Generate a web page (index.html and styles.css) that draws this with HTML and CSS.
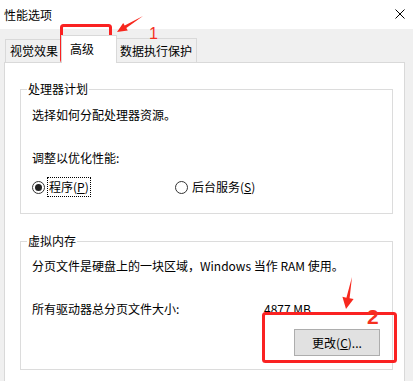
FILE: index.html
```html
<!DOCTYPE html>
<html lang="zh-CN">
<head>
  <meta charset="UTF-8">
  <meta name="viewport" content="width=device-width, initial-scale=1.0">
  <title>性能选项</title>
  <link rel="stylesheet" href="styles.css">
</head>
<body>
  <div class="window">
    <div class="titlebar">
      <span class="title">性能选项</span>
      <svg class="close" width="10" height="10" viewBox="0 0 10 10">
        <path d="M0.5 0.5 L9.5 9.5 M9.5 0.5 L0.5 9.5" stroke="#000" stroke-width="1" fill="none"/>
      </svg>
    </div>

    <div class="dialog">
      <div class="tabs">
        <div class="tab">视觉效果</div>
        <div class="tab active">高级</div>
        <div class="tab">数据执行保护</div>
      </div>

      <div class="panel">
        <fieldset class="group cpu">
          <legend>处理器计划</legend>
          <p class="line first">选择如何分配处理器资源。</p>
          <p class="line next">调整以优化性能:</p>
          <div class="radios">
            <label class="option wide"><span class="radio checked"></span><span class="focus">程序(<u>P</u>)</span></label>
            <label class="option"><span class="radio"></span><span class="text">后台服务(<u>S</u>)</span></label>
          </div>
        </fieldset>

        <fieldset class="group vm">
          <legend>虚拟内存</legend>
          <p class="line first">分页文件是硬盘上的一块区域，Windows 当作 RAM 使用。</p>
          <div class="line next size-row">
            <span>所有驱动器总分页文件大小:</span>
            <span>4877 MB</span>
          </div>
          <div class="actions">
            <button type="button" class="btn">更改(<u>C</u>)...</button>
          </div>
        </fieldset>
      </div>
    </div>

    <!-- red annotations drawn over the screenshot -->
    <svg class="marks" width="413" height="381" viewBox="0 0 413 381">
      <rect x="61.5" y="25.5" width="49" height="36" rx="2" fill="none" stroke="#fa2222" stroke-width="3"/>
      <polygon points="143,16 126.3,28.1 127.8,30.6 117,32 123.2,23 124.7,25.5" fill="#f7281e"/>
      <rect x="263.5" y="313.5" width="132" height="48" rx="2" fill="none" stroke="#fa2222" stroke-width="3"/>
      <polygon points="352,277 349.6,298.3 353.6,299 346,309 342.4,296.8 346.4,297.7" fill="#f7281e"/>
    </svg>
    <span class="num one">1</span>
    <span class="num two">2</span>
  </div>
</body>
</html>
```

FILE: styles.css
```css
body {
  margin: 0;
  font-family: "Noto Sans CJK SC", "Noto Sans", sans-serif;
  font-size: 12px;
  color: #000;
  background-color: #f0f0f0;
  overflow: hidden;
}

.window {
  position: relative;
  width: 413px;
  height: 381px;
  overflow: hidden;
}

.titlebar {
  height: 29px;
  background-color: #fff;
  display: flex;
  align-items: center;
  justify-content: space-between;
  padding: 0 8px 0 4px;
  box-sizing: border-box;
}

.title {
  line-height: 16px;
}

.close {
  display: block;
  margin-top: -1px;
}

.dialog {
  padding: 0 8px 0 4px;
}

.tabs {
  height: 33px;
  display: flex;
  align-items: flex-end;
  padding-left: 1px;
}

.tab {
  height: 22px;
  line-height: 22px;
  padding: 0 4px;
  border: 1px solid #d9d9d9;
  border-bottom: none;
  background-color: #f0f0f0;
  white-space: nowrap;
}

.tab.active {
  position: relative;
  z-index: 1;
  height: 27px;
  line-height: 25px;
  margin: 0 -2px -1px;
  padding: 0 22px 0 8px;
  background-color: #fff;
}

.tab:last-child {
  height: 23px;
  line-height: 23px;
}

.panel {
  height: 330px;
  background-color: #fff;
  border: 1px solid #d9d9d9;
  overflow: hidden;
}

.group {
  margin: 18px 11px 0 15px;
  padding: 0 12px 16px 11px;
  border: 1px solid #dcdcdc;
  min-width: 0;
}

.group.vm {
  margin-top: 19px;
  padding-bottom: 13px;
}

legend {
  padding: 0 1px;
  margin-left: -5px;
  line-height: 16px;
}

.line {
  margin: 0;
  line-height: 16px;
  white-space: nowrap;
}

.cpu .first {
  margin-top: 10px;
}

.vm .first {
  margin-top: 9px;
}

.line.next {
  margin-top: 27px;
}

.radios {
  display: flex;
  margin-top: 11px;
  height: 20px;
}

.option {
  display: flex;
  align-items: center;
}

.option.wide {
  width: 143px;
}

.radio {
  width: 11px;
  height: 11px;
  border: 1px solid #333;
  border-radius: 50%;
  background-color: #fff;
  display: flex;
  align-items: center;
  justify-content: center;
  margin-right: 2px;
}

.radio.checked::after {
  content: "";
  width: 7px;
  height: 7px;
  border-radius: 50%;
  background-color: #222;
}

.focus {
  border: 1px dotted #000;
  padding: 0 1px;
  line-height: 18px;
}

.text {
  padding-left: 2px;
  line-height: 18px;
}

u {
  text-decoration: underline;
  text-underline-offset: 1px;
}

.size-row {
  display: grid;
  grid-template-columns: 232px auto;
}

.actions {
  display: flex;
  justify-content: flex-end;
  margin-top: 12px;
}

.btn {
  width: 86px;
  height: 27px;
  background-color: #e1e1e1;
  border: 1px solid #adadad;
  font-family: inherit;
  font-size: 12px;
  color: #000;
  padding: 0;
}

.marks {
  position: absolute;
  top: 0;
  left: 0;
  pointer-events: none;
}

.num {
  position: absolute;
  font-family: "Liberation Sans", sans-serif;
  color: #f5301f;
  line-height: 1;
}

.num.one {
  left: 149px;
  top: 26px;
  font-size: 16px;
}

.num.two {
  left: 367px;
  top: 306px;
  font-size: 21px;
  font-weight: 600;
}
```
